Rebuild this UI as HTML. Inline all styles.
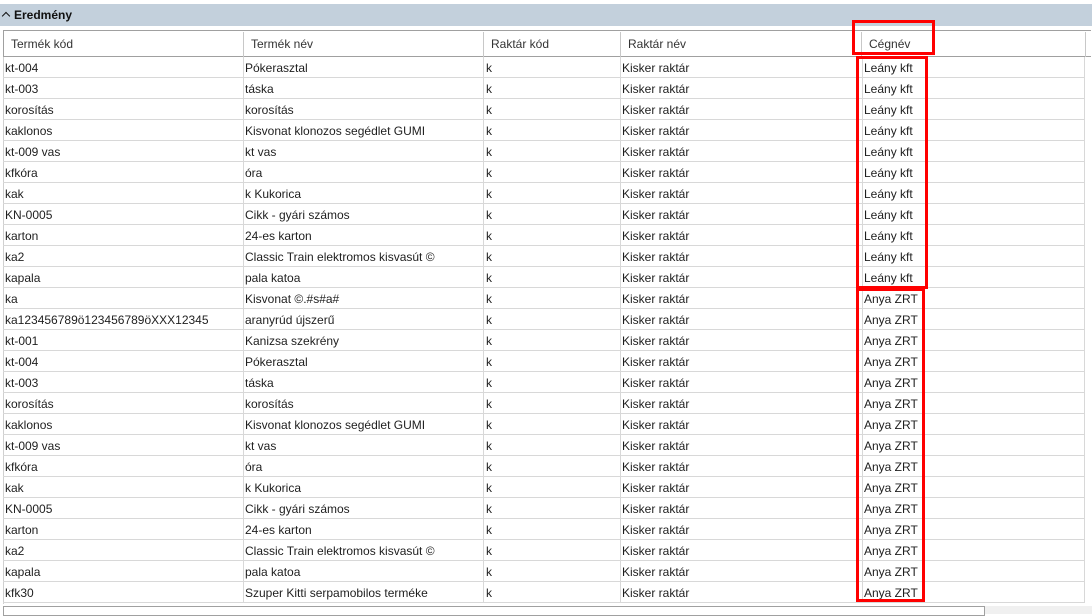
<!DOCTYPE html>
<html><head><meta charset="utf-8"><style>
body{margin:0;width:1092px;height:612px;background:#fff;position:relative;overflow:hidden;font-family:"Segoe UI","Liberation Sans",sans-serif;font-size:12px;color:#1e1e1e}
.tb{position:absolute;left:0;top:4px;width:1092px;height:22px;background:#c3d0dc}
.tb span{position:absolute;left:14px;top:4px;font-weight:bold;font-size:12px;color:#111}
.tb i{position:absolute;left:3px;top:9px;width:5px;height:5px;border-left:1.5px solid #111;border-top:1.5px solid #111;transform:rotate(45deg)}
.hd{position:absolute;left:3px;top:30px;width:1088px;height:27px;border-top:1px solid #a0a0a0;border-bottom:1px solid #a0a0a0;border-left:1px solid #a0a0a0;box-sizing:border-box;background:#fff}
.hd div{position:absolute;top:1px;height:25px;line-height:25px;border-right:1px solid #c8c8c8;padding-left:7px;box-sizing:border-box;color:#333}
.r{position:absolute;left:3px;width:1082px;height:21px;border-bottom:1px solid #d8d8d8;box-sizing:border-box}
.r span{position:absolute;top:0;height:20px;line-height:22px;padding-left:2px;border-right:1px solid #d8d8d8;box-sizing:border-box;white-space:nowrap;overflow:hidden}
.c1{left:0;width:241px}.c2{left:240px;width:241px}.c3{left:481px;width:137px}.c4{left:617px;width:243px}.c5{left:859px;width:223px}
.red{position:absolute;border:3px solid #f00;box-sizing:border-box}
.sb{position:absolute;left:3px;top:606px;width:980px;height:8px;border:1px solid #a0a0a0;background:#fff}
.sb2{position:absolute;left:985px;top:606px;width:107px;height:8px;background:#f0f0f0}
.ll{position:absolute;left:3px;top:57px;width:1px;height:547px;background:#d0d0d0}
</style></head><body>
<div class="tb"><i></i><span>Eredmény</span></div>
<div class="hd">
<div style="left:0;width:240px">Termék kód</div>
<div style="left:240px;width:240px">Termék név</div>
<div style="left:480px;width:137px">Raktár kód</div>
<div style="left:617px;width:241px">Raktár név</div>
<div style="left:858px;width:224px">Cégnév</div>
</div>
<div class="ll"></div>
<div class="r" style="top:57px"><span class="c1">kt-004</span><span class="c2">Pókerasztal</span><span class="c3">k</span><span class="c4">Kisker raktár</span><span class="c5">Leány kft</span></div>
<div class="r" style="top:78px"><span class="c1">kt-003</span><span class="c2">táska</span><span class="c3">k</span><span class="c4">Kisker raktár</span><span class="c5">Leány kft</span></div>
<div class="r" style="top:99px"><span class="c1">korosítás</span><span class="c2">korosítás</span><span class="c3">k</span><span class="c4">Kisker raktár</span><span class="c5">Leány kft</span></div>
<div class="r" style="top:120px"><span class="c1">kaklonos</span><span class="c2">Kisvonat klonozos segédlet GUMI</span><span class="c3">k</span><span class="c4">Kisker raktár</span><span class="c5">Leány kft</span></div>
<div class="r" style="top:141px"><span class="c1">kt-009 vas</span><span class="c2">kt vas</span><span class="c3">k</span><span class="c4">Kisker raktár</span><span class="c5">Leány kft</span></div>
<div class="r" style="top:162px"><span class="c1">kfkóra</span><span class="c2">óra</span><span class="c3">k</span><span class="c4">Kisker raktár</span><span class="c5">Leány kft</span></div>
<div class="r" style="top:183px"><span class="c1">kak</span><span class="c2">k Kukorica</span><span class="c3">k</span><span class="c4">Kisker raktár</span><span class="c5">Leány kft</span></div>
<div class="r" style="top:204px"><span class="c1">KN-0005</span><span class="c2">Cikk - gyári számos</span><span class="c3">k</span><span class="c4">Kisker raktár</span><span class="c5">Leány kft</span></div>
<div class="r" style="top:225px"><span class="c1">karton</span><span class="c2">24-es karton</span><span class="c3">k</span><span class="c4">Kisker raktár</span><span class="c5">Leány kft</span></div>
<div class="r" style="top:246px"><span class="c1">ka2</span><span class="c2">Classic Train elektromos kisvasút ©</span><span class="c3">k</span><span class="c4">Kisker raktár</span><span class="c5">Leány kft</span></div>
<div class="r" style="top:267px"><span class="c1">kapala</span><span class="c2">pala katoa</span><span class="c3">k</span><span class="c4">Kisker raktár</span><span class="c5">Leány kft</span></div>
<div class="r" style="top:288px"><span class="c1">ka</span><span class="c2">Kisvonat ©.#s#a#</span><span class="c3">k</span><span class="c4">Kisker raktár</span><span class="c5">Anya ZRT</span></div>
<div class="r" style="top:309px"><span class="c1">ka123456789ö123456789öXXX12345</span><span class="c2">aranyrúd újszerű</span><span class="c3">k</span><span class="c4">Kisker raktár</span><span class="c5">Anya ZRT</span></div>
<div class="r" style="top:330px"><span class="c1">kt-001</span><span class="c2">Kanizsa szekrény</span><span class="c3">k</span><span class="c4">Kisker raktár</span><span class="c5">Anya ZRT</span></div>
<div class="r" style="top:351px"><span class="c1">kt-004</span><span class="c2">Pókerasztal</span><span class="c3">k</span><span class="c4">Kisker raktár</span><span class="c5">Anya ZRT</span></div>
<div class="r" style="top:372px"><span class="c1">kt-003</span><span class="c2">táska</span><span class="c3">k</span><span class="c4">Kisker raktár</span><span class="c5">Anya ZRT</span></div>
<div class="r" style="top:393px"><span class="c1">korosítás</span><span class="c2">korosítás</span><span class="c3">k</span><span class="c4">Kisker raktár</span><span class="c5">Anya ZRT</span></div>
<div class="r" style="top:414px"><span class="c1">kaklonos</span><span class="c2">Kisvonat klonozos segédlet GUMI</span><span class="c3">k</span><span class="c4">Kisker raktár</span><span class="c5">Anya ZRT</span></div>
<div class="r" style="top:435px"><span class="c1">kt-009 vas</span><span class="c2">kt vas</span><span class="c3">k</span><span class="c4">Kisker raktár</span><span class="c5">Anya ZRT</span></div>
<div class="r" style="top:456px"><span class="c1">kfkóra</span><span class="c2">óra</span><span class="c3">k</span><span class="c4">Kisker raktár</span><span class="c5">Anya ZRT</span></div>
<div class="r" style="top:477px"><span class="c1">kak</span><span class="c2">k Kukorica</span><span class="c3">k</span><span class="c4">Kisker raktár</span><span class="c5">Anya ZRT</span></div>
<div class="r" style="top:498px"><span class="c1">KN-0005</span><span class="c2">Cikk - gyári számos</span><span class="c3">k</span><span class="c4">Kisker raktár</span><span class="c5">Anya ZRT</span></div>
<div class="r" style="top:519px"><span class="c1">karton</span><span class="c2">24-es karton</span><span class="c3">k</span><span class="c4">Kisker raktár</span><span class="c5">Anya ZRT</span></div>
<div class="r" style="top:540px"><span class="c1">ka2</span><span class="c2">Classic Train elektromos kisvasút ©</span><span class="c3">k</span><span class="c4">Kisker raktár</span><span class="c5">Anya ZRT</span></div>
<div class="r" style="top:561px"><span class="c1">kapala</span><span class="c2">pala katoa</span><span class="c3">k</span><span class="c4">Kisker raktár</span><span class="c5">Anya ZRT</span></div>
<div class="r" style="top:582px"><span class="c1">kfk30</span><span class="c2">Szuper Kitti serpamobilos terméke</span><span class="c3">k</span><span class="c4">Kisker raktár</span><span class="c5">Anya ZRT</span></div>
<div class="red" style="left:852px;top:20px;width:83px;height:35px"></div>
<div class="red" style="left:856px;top:56px;width:72px;height:233px"></div>
<div class="red" style="left:856px;top:288px;width:69px;height:314px"></div>
<div class="sb"></div><div class="sb2"></div>
</body></html>
